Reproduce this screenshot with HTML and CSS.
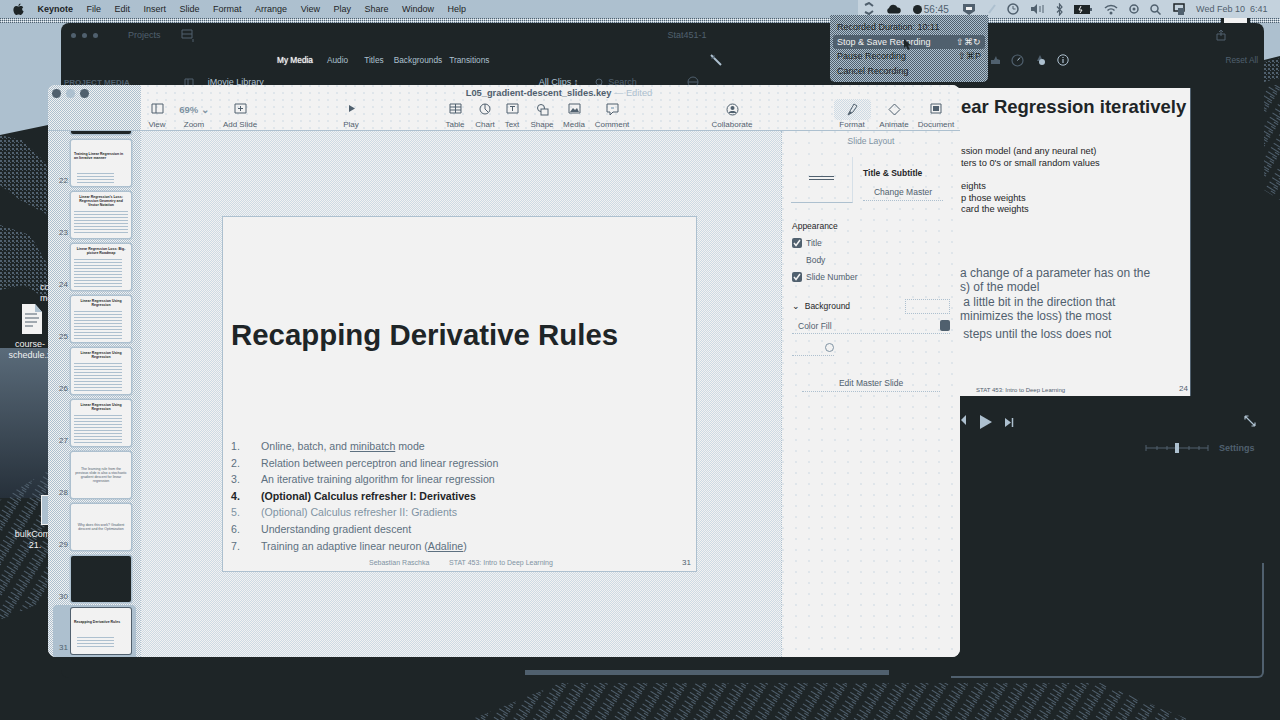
FILE: index.html
```html
<!DOCTYPE html>
<html>
<head>
    <title>Keynote</title>
    <link rel="stylesheet" href="styles.css">
</head>
<body>
    <!-- Wallpaper -->
    <svg class="wallpaper" width="1280" height="720" viewBox="0 0 1280 720">
        <defs>
            <pattern id="waves" width="17" height="5" patternUnits="userSpaceOnUse" patternTransform="rotate(32)">
                <rect x="0" y="1" width="10" height="1" fill="#50606e"></rect>
                <rect x="6" y="3" width="5" height="1" fill="#50606e"></rect>
            </pattern>
            <pattern id="dots" width="4" height="4" patternUnits="userSpaceOnUse">
                <rect x="0" y="0" width="2" height="2" fill="#50606e"></rect>
                <rect x="2" y="2" width="1" height="1" fill="#50606e"></rect>
            </pattern>
            <pattern id="strip" width="2" height="2" patternUnits="userSpaceOnUse">
                <rect x="0" y="0" width="1" height="1" fill="#50606e"></rect>
                <rect x="1" y="1" width="1" height="1" fill="#f2f2f2"></rect>
            </pattern>
            <linearGradient id="fog" x1="0" y1="0" x2="0" y2="1">
                <stop offset="0" stop-color="#5a6b7a"></stop>
                <stop offset="1" stop-color="#26303a"></stop>
            </linearGradient>
        </defs>
        <rect x="0" y="0" width="1280" height="135" fill="#adc0cf"></rect>
        <rect x="0" y="18" width="1280" height="5" fill="url(#strip)"></rect>
        <polygon points="0,135 48,125 48,350 0,350" fill="#1e2527"></polygon>
        <polygon points="0,135 22,140 48,165 48,215 20,200 0,185" fill="url(#dots)"></polygon>
        <polygon points="0,225 30,235 48,265 48,300 24,285 0,290" fill="url(#dots)"></polygon>
        <rect x="0" y="348" width="48" height="150" fill="url(#fog)"></rect>
        <polygon points="0,500 48,470 48,600 0,620" fill="url(#waves)"></polygon>
        <polygon points="1264,60 1280,56 1280,720 1264,720" fill="#1e2527"></polygon>
        <polygon points="1264,62 1280,58 1280,78 1264,82" fill="url(#dots)"></polygon>
        <polygon points="1264,85 1280,85 1280,200 1264,190" fill="url(#waves)"></polygon>
        <polygon points="470,720 560,683 1100,683 1190,720" fill="url(#waves)"></polygon>
        <rect x="1221" y="16" width="29" height="7" fill="#f2f2f2"></rect>
        <rect x="1221" y="16" width="3" height="7" fill="#1e2527"></rect>
        <rect x="1247" y="16" width="3" height="7" fill="#1e2527"></rect>
    </svg>

    <!-- Desktop icons -->
    <div class="desktop-file file-course">
        <svg width="22" height="30" viewBox="0 0 22 30"><path d="M1 0H14L21 8V30H1Z" fill="#f2f2f2"></path><path d="M14 0V8H21" fill="#adc0cf"></path><path d="M4 10H16M4 14H18M4 18H16M4 22H12" stroke="#50606e"></path></svg>
    </div>
    <div class="desktop-label label-course">course-<br>schedule.x</div>
    <div class="desktop-label label-co">co<br>me</div>
    <div class="desktop-file file-bulk"></div>
    <div class="desktop-label label-bulk">bulkComp<br>21.</div>

    <!-- Menu bar -->
    <header class="menubar">
        <svg class="apple" width="11" height="13" viewBox="0 0 11 13"><path d="M7.5 0.5C7.6 2 6.5 3 5.4 3C5.3 1.8 6.4 0.7 7.5 0.5ZM5.5 3.6C6.1 3.6 6.9 3 7.9 3C8.7 3 9.7 3.5 10.2 4.3C8.6 5.2 8.8 7.6 10.6 8.3C10.1 9.7 8.9 12 7.7 12C6.8 12 6.6 11.5 5.5 11.5C4.5 11.5 4.1 12 3.3 12C2 12 0.4 9.2 0.4 6.8C0.4 4.5 1.8 3.1 3.2 3.1C4.2 3.1 4.9 3.6 5.5 3.6Z"></path></svg>
        <b class="menu-app">Keynote</b>
        <span>File</span><span>Edit</span><span>Insert</span><span>Slide</span><span>Format</span><span>Arrange</span><span>View</span><span>Play</span><span>Share</span><span>Window</span><span>Help</span>
        <div class="status">
            <svg width="12" height="14" viewBox="0 0 12 14"><path d="M2 3L6 1L10 4M10 9L6 12L2 10" fill="none" stroke="#50606e" stroke-width="2"></path></svg>
            <svg width="15" height="10" viewBox="0 0 15 10"><path d="M3 9.5A3 3 0 0 1 3 4A4.5 4.5 0 0 1 11.500 3.500A3 3 0 0 1 12 9.500Z" fill="#1e2527"></path></svg>
            <span class="status-time"><i class="rec-dot"></i>56:45</span>
            <svg width="14" height="13" viewBox="0 0 14 13"><path d="M1 1H13V8L7 12L1 8Z" fill="#50606e"></path><path d="M4 4H10V7H4Z" fill="#f2f2f2"></path></svg>
            <svg width="8" height="10" viewBox="0 0 8 10"><path d="M1 9L7 1" stroke="#adc0cf" stroke-width="2"></path></svg>
            <svg width="12" height="12" viewBox="0 0 12 12"><circle cx="6" cy="6" r="5" fill="none" stroke="#50606e" stroke-width="1.500"></circle><path d="M6 3V6H8.500" fill="none" stroke="#50606e"></path></svg>
            <svg width="14" height="12" viewBox="0 0 14 12"><path d="M1 4H4L7 1V11L4 8H1Z" fill="#50606e"></path><path d="M10 3V9M13 2V10" stroke="#50606e"></path></svg>
            <svg width="7" height="13" viewBox="0 0 7 13"><path d="M1 3.500L6 9L3.500 12V1L6 4L1 9.500" fill="none" stroke="#50606e" stroke-width="1.200"></path></svg>
            <svg width="18" height="9" viewBox="0 0 18 9"><rect width="16" height="9" fill="#1e2527"></rect><rect x="16" y="3" width="2" height="3" fill="#50606e"></rect><path d="M7 1L5 5H8L6 8" stroke="#f2f2f2" fill="none"></path></svg>
            <svg width="14" height="11" viewBox="0 0 14 11"><path d="M1 4A8.500 8.500 0 0 1 13 4M3.500 6.500A5 5 0 0 1 10.500 6.500" fill="none" stroke="#50606e" stroke-width="1.500"></path><circle cx="7" cy="9" r="1.500" fill="#50606e"></circle></svg>
            <svg width="10" height="12" viewBox="0 0 10 12"><circle cx="5" cy="6" r="4" fill="none" stroke="#50606e" stroke-width="1.500"></circle><circle cx="5" cy="6" r="1.500" fill="#50606e"></circle></svg>
            <svg width="11" height="11" viewBox="0 0 11 11"><circle cx="4.500" cy="4.500" r="3.500" fill="none" stroke="#50606e" stroke-width="1.500"></circle><path d="M7 7L10.500 10.500" stroke="#50606e" stroke-width="1.500"></path></svg>
            <svg width="12" height="12" viewBox="0 0 12 12"><rect x="1" y="1" width="10" height="7" fill="none" stroke="#1e2527" stroke-width="1.500"></rect><rect x="5" y="5" width="6" height="7" fill="#50606e"></rect></svg>
            <span class="status-clock">Wed Feb 10&nbsp; 6:41</span>
        </div>
    </header>

    <!-- iMovie window behind -->
    <section class="movie-window">
        <div class="movie-title">
            <span class="light"></span><span class="light"></span><span class="light"></span>
            <span class="movie-projects">Projects</span>
            <svg class="movie-film" width="14" height="13" viewBox="0 0 14 13"><path d="M1 1H11V9H1ZM1 5H11M12 10V13" fill="none" stroke="#50606e"></path></svg>
            <span class="movie-name">Stat451-1</span>
            <svg class="movie-share" width="10" height="12" viewBox="0 0 10 12"><path d="M1 5H9V11H1ZM5 7V1M3 3L5 1L7 3" fill="none" stroke="#50606e"></path></svg>
        </div>
        <div class="movie-tabs">
            <b class="tab-active">My Media</b>
            <span class="tab-audio">Audio</span>
            <span class="tab-titles">Titles</span>
            <span class="tab-bg">Backgrounds</span>
            <span class="tab-trans">Transitions</span>
            <svg class="wand" width="12" height="12" viewBox="0 0 12 12"><path d="M1 1L11 11" stroke="#adc0cf" stroke-width="2"></path><path d="M1 4H4M4 1V4" stroke="#50606e"></path></svg>
            <div class="inspect-icons">
                <svg width="11" height="10" viewBox="0 0 11 10"><path d="M1 9H10V5L7 4L6 1L4 5H1Z" fill="#50606e"></path></svg>
                <svg width="13" height="13" viewBox="0 0 13 13"><circle cx="6.500" cy="6.500" r="5.500" fill="none" stroke="#50606e" stroke-width="1.200"></circle><path d="M6.500 6.500L9 3.500" stroke="#adc0cf"></path></svg>
                <svg width="13" height="12" viewBox="0 0 13 12"><path d="M6 1L9 7H3Z" fill="#50606e"></path><circle cx="8" cy="8" r="3" fill="#adc0cf"></circle></svg>
                <svg width="12" height="12" viewBox="0 0 12 12"><circle cx="6" cy="6" r="5.200" fill="none" stroke="#adc0cf"></circle><path d="M6 5V9M6 3V4" stroke="#adc0cf" stroke-width="1.200"></path></svg>
            </div>
            <span class="reset-all">Reset All</span>
        </div>
        <div class="movie-lib">
            <b class="project-media">PROJECT MEDIA</b>
            <svg class="lib-icon" width="10" height="9" viewBox="0 0 10 9"><path d="M1 1H9V8H1ZM4 1V8" fill="none" stroke="#50606e"></path></svg>
            <span class="lib-name">iMovie Library</span>
            <span class="lib-clips">All Clips &#8597;</span>
            <svg class="lib-search" width="9" height="9" viewBox="0 0 9 9"><circle cx="4" cy="4" r="3" fill="none" stroke="#50606e"></circle><path d="M6 6L9 9" stroke="#50606e"></path></svg>
            <span class="lib-search-text">Search</span>
            <svg class="lib-gauge" width="12" height="12" viewBox="0 0 12 12"><circle cx="6" cy="6" r="5" fill="none" stroke="#50606e"></circle><path d="M1 6H11" stroke="#50606e"></path></svg>
        </div>

        <div class="preview-slide">
            <h2 class="preview-title">ear Regression iteratively</h2>
            <div class="preview-small">
                <p>ssion model (and any neural net)</p>
                <p>ters to 0's or small random values</p>
                <p class="preview-gap">eights</p>
                <p>p those weights</p>
                <p>card the weights</p>
            </div>
            <div class="preview-large">
                <p>a change of a parameter has on the</p>
                <p>s) of the model</p>
                <p>&nbsp;a little bit in the direction that</p>
                <p>minimizes the loss) the most</p>
                <p class="preview-last">&nbsp;steps until the loss does not</p>
            </div>
            <div class="preview-foot"><span>STAT 453: Intro to Deep Learning</span><span class="preview-num">24</span></div>
        </div>

        <div class="player">
            <svg class="player-prev" width="6" height="10" viewBox="0 0 6 10"><path d="M6 0V10L1 5Z" fill="#adc0cf"></path></svg>
            <svg class="player-play" width="14" height="14" viewBox="0 0 14 14"><path d="M1 0V14L13 7Z" fill="#adc0cf"></path></svg>
            <svg class="player-next" width="10" height="9" viewBox="0 0 10 9"><path d="M1 0V9L7 4.500Z" fill="#adc0cf"></path><path d="M8.500 0V9" stroke="#adc0cf" stroke-width="1.500"></path></svg>
            <svg class="player-full" width="12" height="12" viewBox="0 0 12 12"><path d="M1 1L11 11M1 1H4.500M1 1V4.500M11 11H7.500M11 11V7.500" fill="none" stroke="#adc0cf" stroke-width="1.200"></path></svg>
        </div>
        <div class="timeline-head">
            <svg class="zoom-slider" width="64" height="10" viewBox="0 0 64 10"><path d="M1 5H63M1 2V8M63 2V8M12 3V7M22 3V7M44 3V7M54 3V7" stroke="#50606e"></path><rect x="30" y="0" width="4" height="10" fill="#adc0cf"></rect></svg>
            <span class="timeline-settings">Settings</span>
        </div>
        <div class="timeline-frame"></div>
        <div class="movie-scroll"></div>
    </section>

    <!-- Recording menu -->
    <div class="rec-menu">
        <div class="rec-row">Recorded Duration: 10:11</div>
        <div class="rec-row rec-active"><span>Stop &amp; Save Recording</span><span>&#8679;&#8984;&#8635;</span></div>
        <div class="rec-row"><span>Pause Recording</span><span>&#8679;&#8984;P</span></div>
        <div class="rec-row">Cancel Recording</div>
    </div>
    <svg class="cursor" width="7" height="11" viewBox="0 0 7 11"><path d="M0 0V9L2 7L4 11L5.500 10L4 6.500H7Z" fill="#1e2527"></path></svg>

    <!-- Keynote window -->
    <main class="keynote">
        <div class="kn-toolbar">
            <div class="kn-side"></div>
            <div class="kn-lights"><i class="kn-light"></i><i class="kn-light kn-light-off"></i><i class="kn-light"></i></div>
            <div class="kn-title"><b>L05_gradient-descent_slides.key</b> <span>&mdash; Edited</span></div>
            <div class="tools">
                <div class="tool t-view"><svg width="13" height="11" viewBox="0 0 13 11"><path d="M1 1H12V10H1ZM5 1V10" fill="none" stroke="#50606e"></path></svg><span>View</span></div>
                <div class="tool t-zoom"><strong class="zoom-val">69% &#8964;</strong><span>Zoom</span></div>
                <div class="tool t-add"><svg width="13" height="11" viewBox="0 0 13 11"><path d="M1 1H12V10H1ZM6.500 3V8M4 5.500H9" fill="none" stroke="#50606e"></path></svg><span>Add Slide</span></div>
                <div class="tool t-play"><svg width="9" height="11" viewBox="0 0 9 11"><path d="M2 2V9L8 5.500Z" fill="#50606e"></path></svg><span>Play</span></div>
                <div class="tool t-table"><svg width="13" height="11" viewBox="0 0 13 11"><path d="M1 1H12V10H1ZM1 4H12M1 7H12M6.500 1V10" fill="none" stroke="#50606e"></path></svg><span>Table</span></div>
                <div class="tool"><svg width="12" height="12" viewBox="0 0 12 12"><circle cx="6" cy="6" r="5" fill="none" stroke="#50606e"></circle><path d="M6 1V6L9 9" fill="none" stroke="#50606e"></path></svg><span>Chart</span></div>
                <div class="tool t-text"><svg width="13" height="11" viewBox="0 0 13 11"><path d="M1 1H12V10H1ZM4 3.500H9M6.500 3.500V8" fill="none" stroke="#50606e"></path></svg><span>Text</span></div>
                <div class="tool"><svg width="13" height="13" viewBox="0 0 13 13"><circle cx="5" cy="5" r="3.500" fill="none" stroke="#50606e"></circle><rect x="5" y="6" width="7" height="6" fill="#f2f2f2" stroke="#50606e"></rect></svg><span>Shape</span></div>
                <div class="tool t-media"><svg width="13" height="11" viewBox="0 0 13 11"><path d="M1 1H12V10H1Z" fill="none" stroke="#50606e"></path><path d="M2 9L5 5L7 7L9 5L11 9Z" fill="#50606e"></path></svg><span>Media</span></div>
                <div class="tool t-comment"><svg width="13" height="13" viewBox="0 0 13 13"><path d="M1 1H12V9H7L4 12V9H1Z" fill="none" stroke="#50606e"></path><path d="M5 4H8V6H5Z" fill="#adc0cf"></path></svg><span>Comment</span></div>
                <div class="tool t-collab"><svg width="13" height="13" viewBox="0 0 13 13"><circle cx="6.500" cy="6.500" r="5.500" fill="none" stroke="#50606e"></circle><circle cx="6.500" cy="5" r="2" fill="#50606e"></circle><path d="M3 10H10V9L8 8H5L3 9Z" fill="#50606e"></path></svg><span>Collaborate</span></div>
                <div class="tool t-format"><svg width="13" height="13" viewBox="0 0 13 13"><path d="M2 12L4 8L8 1L11 3L7 9Z" fill="none" stroke="#50606e"></path><path d="M2 12L4 8L6 10Z" fill="#50606e"></path></svg><span>Format</span></div>
                <div class="tool t-side"><svg width="13" height="13" viewBox="0 0 13 13"><path d="M6.500 1L12 6.500L6.500 12L1 6.500Z" fill="none" stroke="#50606e"></path></svg><span>Animate</span></div>
                <div class="tool t-side"><svg width="12" height="11" viewBox="0 0 12 11"><path d="M1 1H11V10H1Z" fill="none" stroke="#50606e"></path><rect x="3" y="3" width="6" height="5" fill="#50606e"></rect></svg><span>Document</span></div>
            </div>
        </div>

        <div class="kn-body">
            <!-- Slide navigator -->
            <nav class="navigator">
                <div class="nav-row"><span class="nav-num"></span><div class="thumb thumb-dark"></div></div>
                <div class="nav-row"><span class="nav-num">22</span><div class="thumb"><p class="th-head th-left">Training Linear Regression in an Iterative manner</p><i class="th-lines th-low"></i></div></div>
                <div class="nav-row"><span class="nav-num">23</span><div class="thumb"><p class="th-head">Linear Regression's Loss: Regression Geometry and Vector Notation</p><i class="th-lines th-tall"></i></div></div>
                <div class="nav-row"><span class="nav-num">24</span><div class="thumb"><p class="th-head">Linear Regression Loss: Big-picture Roadmap</p><i class="th-lines th-full"></i></div></div>
                <div class="nav-row"><span class="nav-num">25</span><div class="thumb"><p class="th-head">Linear Regression Using Regression</p><i class="th-lines th-full"></i></div></div>
                <div class="nav-row"><span class="nav-num">26</span><div class="thumb"><p class="th-head">Linear Regression Using Regression</p><i class="th-lines th-full"></i></div></div>
                <div class="nav-row"><span class="nav-num">27</span><div class="thumb"><p class="th-head">Linear Regression Using Regression</p><i class="th-lines th-full"></i></div></div>
                <div class="nav-row"><span class="nav-num">28</span><div class="thumb thumb-center"><p class="th-head th-soft">The learning rule from the previous slide is also a stochastic gradient descent for linear regression</p></div></div>
                <div class="nav-row"><span class="nav-num">29</span><div class="thumb thumb-center"><p class="th-head th-soft">Why does this work? Gradient descent and the Optimization</p></div></div>
                <div class="nav-row"><span class="nav-num">30</span><div class="thumb thumb-dark"></div></div>
                <div class="nav-row nav-selected"><span class="nav-num">31</span><div class="thumb"><p class="th-head th-left">Recapping Derivative Rules</p><i class="th-lines th-low"></i></div></div>
            </nav>

            <!-- Slide canvas -->
            <div class="canvas">
                <article class="slide">
                    <h1 class="slide-title">Recapping Derivative Rules</h1>
                    <ol class="agenda">
                        <li><span>1.</span>Online, batch, and <u>minibatch</u> mode</li>
                        <li><span>2.</span>Relation between perceptron and linear regression</li>
                        <li><span>3.</span>An iterative training algorithm for linear regression</li>
                        <li class="agenda-on"><span>4.</span>(Optional) Calculus refresher I: Derivatives</li>
                        <li class="agenda-soft"><span>5.</span>(Optional) Calculus refresher II: Gradients</li>
                        <li><span>6.</span>Understanding gradient descent</li>
                        <li><span>7.</span>Training an adaptive linear neuron (<u>Adaline</u>)</li>
                    </ol>
                    <div class="slide-foot"><span class="foot-name">Sebastian Raschka</span><span class="foot-course">STAT 453: Intro to Deep Learning</span><span class="foot-num">31</span></div>
                </article>
            </div>

            <!-- Inspector -->
            <aside class="inspector">
                <div class="ins-head">Slide Layout</div>
                <div class="ins-master">
                    <div class="master-thumb"><i></i><i></i></div>
                    <div class="master-info">
                        <b>Title &amp; Subtitle</b>
                        <div class="ins-button">Change Master</div>
                    </div>
                </div>
                <div class="ins-section">Appearance</div>
                <div class="check-row"><i class="check"><svg width="8" height="8" viewBox="0 0 8 8"><path d="M1 4L3 6.500L7 1" fill="none" stroke="#f2f2f2" stroke-width="1.500"></path></svg></i>Title</div>
                <div class="check-row"><i class="check check-off"></i>Body</div>
                <div class="check-row"><i class="check"><svg width="8" height="8" viewBox="0 0 8 8"><path d="M1 4L3 6.500L7 1" fill="none" stroke="#f2f2f2" stroke-width="1.500"></path></svg></i>Slide Number</div>
                <div class="bg-row"><span>&#8964;&nbsp; Background</span><i class="bg-swatch"></i></div>
                <div class="select-row"><span>Color Fill</span><i class="stepper"></i></div>
                <div class="color-row"><i class="color-ring"></i></div>
                <div class="ins-button ins-edit">Edit Master Slide</div>
            </aside>
        </div>
    </main>
</body>
</html>
```

FILE: styles.css
```css
html, body {
    margin: 0;
    padding: 0;
}

body {
    position: relative;
    width: 1280px;
    height: 720px;
    overflow: hidden;
    background-color: #1e2527;
    font-family: "Liberation Sans", Arial, sans-serif;
    color: #50606e;
}

p, h1, h2, ol {
    margin: 0;
    padding: 0;
}

.wallpaper {
    position: absolute;
    top: 0;
    left: 0;
}

/* desktop icons */
.desktop-file {
    position: absolute;
}

.file-course {
    left: 21px;
    top: 304px;
}

.file-bulk {
    left: 41px;
    top: 495px;
    width: 10px;
    height: 28px;
    background-color: #adc0cf;
    border: 1px solid #f2f2f2;
}

.desktop-label {
    position: absolute;
    font-size: 9px;
    line-height: 11px;
    color: #f2f2f2;
    text-align: center;
    white-space: nowrap;
}

.label-course {
    left: 4px;
    top: 339px;
    width: 52px;
}

.label-co {
    left: 40px;
    top: 282px;
    text-align: left;
}

.label-bulk {
    left: 10px;
    top: 529px;
    width: 50px;
}

/* menu bar */
.menubar {
    position: absolute;
    top: 0;
    left: 0;
    right: 0;
    height: 18px;
    display: flex;
    align-items: center;
    gap: 13.500px;
    padding-left: 13px;
    font-size: 9px;
    color: #1e2527;
    background-color: #adc0cf;
}

.apple {
    fill: #1e2527;
}

.menu-app {
    font-weight: bold;
}

.status {
    position: absolute;
    top: 0;
    left: 858px;
    right: 0;
    height: 18px;
    display: flex;
    align-items: center;
    gap: 11.400px;
    padding-left: 5px;
    box-sizing: border-box;
    background-color: #c4d2dd;
}

.status-time {
    display: flex;
    align-items: center;
    gap: 2px;
    font-size: 10px;
    margin-right: 2px;
    color: #50606e;
}

.rec-dot {
    width: 9px;
    height: 9px;
    border-radius: 50%;
    background-color: #1e2527;
}

.status-clock {
    font-size: 9px;
    white-space: nowrap;
    color: #50606e;
}

/* iMovie window */
.movie-window {
    position: absolute;
    left: 61px;
    top: 23px;
    width: 1203px;
    height: 655px;
    box-sizing: border-box;
    background-color: #1e2527;
    border-radius: 8px;
    font-size: 9px;
    color: #adc0cf;
}

.movie-title {
    display: flex;
    align-items: center;
    height: 24px;
    padding-left: 10px;
    gap: 6px;
}

.light {
    width: 5px;
    height: 5px;
    border-radius: 50%;
    background-color: #50606e;
}

.movie-projects {
    margin-left: 24px;
    color: #50606e;
}

.movie-film {
    margin-left: 14px;
}

.movie-name {
    margin-left: 467px;
    color: #50606e;
}

.movie-share {
    margin-left: 503px;
}

.movie-tabs {
    display: flex;
    align-items: center;
    height: 24px;
    margin-top: 1px;
    padding-left: 216px;
    font-size: 8.300px;
    white-space: nowrap;
    color: #adc0cf;
}

.tab-active {
    color: #f2f2f2;
    font-weight: normal;
    text-shadow: 0 0 1px #f2f2f2;
}

.tab-audio {
    margin-left: 14px;
}

.tab-titles {
    margin-left: 16px;
}

.tab-bg {
    margin-left: 10px;
}

.tab-trans {
    margin-left: 7px;
}

.wand {
    margin-left: 221px;
}

.inspect-icons {
    display: flex;
    align-items: center;
    gap: 10px;
    margin-left: 268px;
}

.reset-all {
    margin-left: 156px;
    color: #50606e;
}

.movie-lib {
    display: flex;
    align-items: center;
    height: 18px;
    margin-top: 1px;
    padding-left: 3px;
}

.project-media {
    color: #50606e;
    font-size: 8px;
}

.lib-icon {
    margin-left: 54px;
}

.lib-name {
    margin-left: 14px;
    color: #adc0cf;
}

.lib-clips {
    margin-left: 275px;
}

.lib-search {
    margin-left: 17px;
}

.lib-search-text {
    margin-left: 4px;
    color: #50606e;
}

.lib-gauge {
    margin-left: 50px;
}

/* slide shown in the viewer, mostly hidden by the Keynote window */
.preview-slide {
    position: absolute;
    left: 839px;
    top: 65px;
    width: 291px;
    height: 308px;
    box-sizing: border-box;
    padding: 8px 0 0 61px;
    background-color: #f2f2f2;
    border-right: 1px solid #50606e;
    color: #1e2527;
}

.preview-title {
    font-size: 18.500px;
    line-height: 22px;
    white-space: nowrap;
    font-weight: bold;
    margin-bottom: 28px;
}

.preview-small {
    font-size: 9.300px;
    line-height: 11.600px;
}

.preview-gap {
    margin-top: 12px;
}

.preview-large {
    margin-top: 50px;
    margin-left: -1px;
    font-size: 12px;
    line-height: 14.500px;
    color: #50606e;
    white-space: nowrap;
}

.preview-last {
    margin-top: 3px;
}

.preview-foot {
    position: absolute;
    left: 76px;
    right: 2px;
    bottom: 3px;
    display: flex;
    justify-content: space-between;
    align-items: flex-end;
    font-size: 6px;
    color: #50606e;
}

.preview-num {
    font-size: 8px;
}

.player {
    position: absolute;
    left: 0;
    right: 0;
    top: 392px;
    height: 14px;
}

.player svg {
    position: absolute;
    top: 0;
}

.player-prev {
    left: 899px;
}

.player-play {
    left: 918px;
}

.player .player-next {
    left: 943px;
    top: 3px;
}

.player-full {
    left: 1183px;
}

.timeline-head {
    position: absolute;
    left: 1084px;
    top: 420px;
    display: flex;
    align-items: center;
    gap: 10px;
    color: #50606e;
}

.timeline-settings {
    font-weight: bold;
}

.timeline-frame {
    position: absolute;
    left: 890px;
    right: 0;
    top: 540px;
    bottom: 0;
    box-sizing: border-box;
    border-right: 2px solid #50606e;
    border-bottom: 2px solid #50606e;
    border-radius: 0 0 6px 0;
}

.movie-scroll {
    position: absolute;
    left: 464px;
    top: 647px;
    width: 364px;
    height: 5px;
    background-color: #50606e;
}

/* recording menu */
.rec-menu {
    position: absolute;
    left: 830px;
    top: 15px;
    width: 158px;
    height: 67px;
    box-sizing: border-box;
    padding: 5px 3px;
    font-size: 9px;
    color: #1e2527;
    background-color: #7f93a3;
    background-image: repeating-conic-gradient(#50606e 0 25%, #adc0cf 0 50%);
    background-size: 2px 2px;
    border-radius: 0 0 5px 5px;
}

.rec-row {
    display: flex;
    justify-content: space-between;
    align-items: center;
    height: 14.500px;
    padding: 0 4px;
}

.rec-active {
    background-color: #50606e;
    color: #f2f2f2;
    border-radius: 3px;
}

.cursor {
    position: absolute;
    left: 904px;
    top: 39px;
}

/* Keynote window */
.keynote {
    position: absolute;
    left: 48px;
    top: 85px;
    width: 912px;
    height: 572px;
    display: flex;
    flex-direction: column;
    overflow: hidden;
    border-radius: 8px;
    background-color: #f2f2f2;
}

.kn-toolbar {
    position: relative;
    flex: none;
    height: 46px;
    background-color: #f2f2f2;
    background-image: radial-gradient(circle at 1px 1px, #c9d6e0 0.6px, transparent 0.8px);
    background-size: 9px 7px;
    border-bottom: 1px solid #adc0cf;
    box-sizing: border-box;
}

.kn-side {
    position: absolute;
    left: 0;
    top: 0;
    bottom: 0;
    width: 93px;
    background-image: repeating-conic-gradient(#adc0cf 0 25%, #f2f2f2 0 50%);
    background-size: 2px 2px;
}

.kn-lights {
    position: absolute;
    left: 4px;
    top: 4px;
    display: flex;
    align-items: center;
    gap: 5px;
}

.kn-light {
    width: 9px;
    height: 9px;
    border-radius: 50%;
    background-color: #50606e;
}

.kn-light-off {
    background-color: #adc0cf;
}

.kn-title {
    position: absolute;
    left: 0;
    right: 0;
    top: 3px;
    text-align: center;
    font-size: 9.300px;
    padding-left: 110px;
    white-space: nowrap;
}

.kn-title b {
    color: #50606e;
}

.kn-title span {
    color: #adc0cf;
}

.tools {
    position: absolute;
    left: 94px;
    top: 18px;
    display: flex;
}

.tool {
    width: 30px;
    height: 27px;
    display: flex;
    flex-direction: column;
    align-items: center;
    justify-content: space-between;
    font-size: 8px;
    white-space: nowrap;
    color: #50606e;
}

.tool span {
    line-height: 10px;
}

.zoom-val {
    line-height: 13px;
    font-size: 9.500px;
    font-weight: bold;
    color: #7f93a3;
}

.t-zoom {
    margin-left: 7px;
}

.t-add {
    margin-left: 16px;
}

.t-play {
    margin-left: 81px;
}

.t-table {
    margin-left: 74px;
}

.t-text {
    margin-left: -3px;
}

.t-media {
    margin-left: 2px;
}

.t-comment {
    margin-left: 8px;
}

.t-collab {
    margin-left: 90px;
}

.t-format {
    margin-left: 90px;
}

.t-format svg {
    flex: none;
    padding: 4px 12px;
    margin-top: -4px;
    border-radius: 4px;
    background-image: repeating-conic-gradient(#cddae4 0 25%, #f2f2f2 0 50%);
    background-size: 2px 2px;
}

.t-side {
    margin-left: 12px;
}

.kn-body {
    flex: 1;
    display: flex;
    min-height: 0;
}

/* navigator */
.navigator {
    flex: none;
    width: 93px;
    display: flex;
    flex-direction: column;
    gap: 6px;
    overflow: hidden;
    background-image: repeating-conic-gradient(#adc0cf 0 25%, #f2f2f2 0 50%);
    background-size: 2px 2px;
}

.nav-row {
    flex: none;
    position: relative;
    height: 46px;
    display: flex;
    align-items: flex-end;
    padding-left: 11px;
}

.nav-row:first-child {
    margin-top: -43px;
}

.nav-num {
    width: 12px;
    font-size: 8px;
    line-height: 10px;
    color: #50606e;
}

.thumb {
    width: 60px;
    height: 46px;
    box-sizing: border-box;
    padding: 3px 3px;
    border-radius: 2px;
    background-color: #f2f2f2;
    box-shadow: 0 0 0 1.500px #adc0cf;
    overflow: hidden;
}

.thumb-dark {
    background-color: #1e2527;
}

.thumb-center {
    display: flex;
    align-items: center;
}

.nav-selected {
    margin-left: 5px;
    padding-left: 6px;
    margin-right: 5px;
    height: 52px;
    margin-top: -3px;
    align-items: center;
    background-color: #adc0cf;
    border-radius: 4px 4px 0 0;
}

.nav-selected .nav-num {
    align-self: flex-end;
    padding-bottom: 4px;
}

.nav-selected .thumb {
    box-shadow: 0 0 0 1px #50606e;
}

.th-head {
    font-size: 3.500px;
    line-height: 4px;
    font-weight: bold;
    color: #1e2527;
    text-align: center;
}

.th-soft {
    font-weight: normal;
    color: #50606e;
}

.th-left {
    text-align: left;
    margin-top: 9px;
}

.th-lines {
    display: block;
    margin-top: 4px;
    height: 24px;
    background-image: repeating-linear-gradient(to bottom, #adc0cf 0 1px, transparent 1px 3px);
}

.th-low {
    margin: 13px 14px 0 3px;
    height: 10px;
}

.th-tall {
    height: 22px;
}

.th-full {
    height: 30px;
    margin-right: 6px;
}

/* canvas */
.canvas {
    flex: 1;
    padding: 86px 0 0 82px;
    background-image: repeating-conic-gradient(#cddae4 0 25%, #f2f2f2 0 50%);
    background-size: 2px 2px;
}

.slide {
    position: relative;
    width: 473px;
    height: 354px;
    box-sizing: border-box;
    padding: 0 8px;
    display: flex;
    flex-direction: column;
    background-color: #f2f2f2;
    box-shadow: 0 0 0 1px #adc0cf;
}

.slide-title {
    margin-top: 101px;
    font-size: 29.400px;
    line-height: 34px;
    font-weight: bold;
    color: #1e2527;
    white-space: nowrap;
}

.agenda {
    list-style: none;
    margin-top: 86px;
    font-size: 10.600px;
    line-height: 16.600px;
    color: #5d7080;
}

.agenda li {
    display: flex;
    white-space: pre;
}

.agenda li span {
    width: 30px;
    flex: none;
}

.agenda-on {
    font-weight: bold;
    color: #1e2527;
}

.agenda-soft {
    color: #7f93a3;
}

.slide-foot {
    position: relative;
    height: 12px;
    margin-top: 4px;
    font-size: 7px;
    line-height: 10px;
    color: #7f93a3;
}

.foot-name {
    position: absolute;
    left: 138px;
}

.foot-course {
    position: absolute;
    left: 218px;
}

.foot-num {
    position: absolute;
    right: -3px;
    font-size: 8px;
    color: #50606e;
}

/* inspector */
.inspector {
    flex: none;
    width: 179px;
    box-sizing: border-box;
    padding: 0 10px;
    font-size: 8.500px;
    color: #50606e;
    background-color: #f2f2f2;
    background-image: radial-gradient(circle at 1px 1px, #c9d6e0 0.6px, transparent 0.8px);
    background-size: 13px 11px;
    border-left: 1px dotted #adc0cf;
}

.ins-head {
    text-align: center;
    height: 18px;
    line-height: 20px;
    color: #7f93a3;
}

.ins-master {
    display: flex;
    gap: 10px;
    margin-top: 8px;
    margin-left: -1px;
}

.master-thumb {
    width: 62px;
    height: 46px;
    box-sizing: border-box;
    padding-top: 19px;
    border-bottom: 1px solid #adc0cf;
    border-right: 1px solid #d6e0e8;
}

.master-thumb i {
    display: block;
    height: 1px;
    margin: 0 18px 2px;
    background-color: #50606e;
}

.master-info {
    padding-top: 11px;
}

.master-info b {
    color: #1e2527;
}

.ins-button {
    height: 15px;
    line-height: 15px;
    text-align: center;
    border-bottom: 1px dotted #adc0cf;
}

.master-info .ins-button {
    width: 80px;
    margin-top: 7px;
}

.ins-section {
    margin-top: 17px;
    line-height: 12px;
    color: #1e2527;
}

.check-row {
    display: flex;
    align-items: center;
    gap: 4px;
    height: 17px;
}

.ins-section + .check-row {
    margin-top: 2px;
}

.check {
    width: 10px;
    height: 10px;
    display: flex;
    align-items: center;
    justify-content: center;
    border-radius: 2px;
    background-color: #50606e;
}

.check-off {
    background-color: transparent;
}

.bg-row {
    display: flex;
    justify-content: space-between;
    align-items: center;
    height: 16px;
    margin-top: 13px;
    color: #1e2527;
}

.bg-swatch {
    width: 45px;
    height: 15px;
    border: 1px dotted #adc0cf;
    box-sizing: border-box;
}

.select-row {
    display: flex;
    justify-content: space-between;
    align-items: center;
    height: 15px;
    margin-top: 4px;
    padding-left: 6px;
    border-bottom: 1px dotted #adc0cf;
}

.stepper {
    width: 10px;
    height: 11px;
    border-radius: 2px;
    background-color: #50606e;
}

.color-row {
    display: flex;
    justify-content: flex-end;
    width: 42px;
    height: 16px;
    margin-top: 5px;
    align-items: center;
    border-bottom: 1px dotted #adc0cf;
}

.color-ring {
    width: 7px;
    height: 7px;
    border: 1px solid #7f93a3;
    border-radius: 50%;
}

.ins-edit {
    margin: 20px 10px 0;
}
```
